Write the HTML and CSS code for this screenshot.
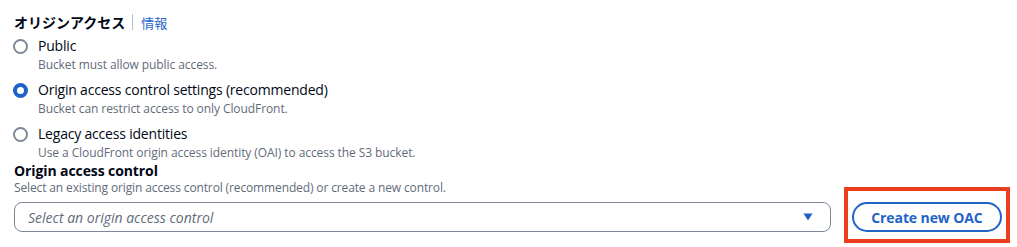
FILE: index.html
```html
<!DOCTYPE html>
<html lang="ja">
<head>
    <meta charset="UTF-8">
    <meta name="viewport" content="width=device-width, initial-scale=1.0">
    <title>Origin access</title>
    <link rel="stylesheet" href="styles.css">
</head>
<body>

    <div class="panel">
        <div class="field-title">
            <span class="title-text">オリジンアクセス</span>
            <span class="divider"></span>
            <a class="info-link" href="#">情報</a>
        </div>

        <div class="radio-group">
            <label class="radio">
                <span class="circle"></span>
                <span class="radio-body">
                    <span class="radio-label">Public</span>
                    <span class="radio-desc">Bucket must allow public access.</span>
                </span>
            </label>
            <label class="radio">
                <span class="circle checked"></span>
                <span class="radio-body">
                    <span class="radio-label">Origin access control settings (recommended)</span>
                    <span class="radio-desc">Bucket can restrict access to only CloudFront.</span>
                </span>
            </label>
            <label class="radio">
                <span class="circle"></span>
                <span class="radio-body">
                    <span class="radio-label">Legacy access identities</span>
                    <span class="radio-desc">Use a CloudFront origin access identity (OAI) to access the S3 bucket.</span>
                </span>
            </label>
        </div>

        <div class="sub-title">Origin access control</div>
        <div class="sub-desc">Select an existing origin access control (recommended) or create a new control.</div>

        <div class="control-row">
            <div class="select">
                <span class="placeholder">Select an origin access control</span>
                <svg class="caret" width="10" height="8" viewBox="0 0 10 8">
                    <path d="M0.5 0.5 L9.5 0.5 L5 7.5 Z" fill="#1f5fc4"/>
                </svg>
            </div>
            <div class="highlight">
                <button class="btn-outline">Create new OAC</button>
            </div>
        </div>
    </div>

</body>
</html>
```

FILE: styles.css
```css
* {
    box-sizing: border-box;
}

html,
body {
    height: 100%;
}

body {
    margin: 0;
    background-color: #ffffff;
    font-family: "Open Sans", "Noto Sans CJK JP", sans-serif;
    color: #000716;
}

.panel {
    padding: 12px 15px 15px 14px;
    display: flex;
    flex-direction: column;
}

.field-title {
    display: flex;
    align-items: center;
    height: 20px;
    font-size: 14px;
}

.title-text {
    font-weight: 700;
    font-family: "Noto Sans CJK JP", sans-serif;
}

.divider {
    width: 1px;
    height: 16px;
    background-color: #b6bec9;
    margin: 0 8px 0 7px;
}

.info-link {
    color: #1f63c9;
    text-decoration: none;
    font-size: 13px;
    font-family: "Noto Sans CJK JP", sans-serif;
}

.radio-group {
    margin-top: 4px;
    display: flex;
    flex-direction: column;
    gap: 6px;
}

.radio {
    display: flex;
    align-items: flex-start;
}

.circle {
    width: 15px;
    height: 15px;
    border-radius: 50%;
    border: 2px solid #7d8998;
    margin: 3px 10px 0 -1px;
    flex-shrink: 0;
}

.circle.checked {
    border: 4.5px solid #1f63c9;
}

.radio-body {
    display: flex;
    flex-direction: column;
}

.radio-label {
    font-size: 14px;
    line-height: 20px;
    letter-spacing: -0.2px;
}

.radio-desc {
    font-size: 12px;
    line-height: 18px;
    color: #5f6b7a;
    letter-spacing: -0.08px;
}

.sub-title {
    font-size: 14px;
    font-weight: 700;
    line-height: 18px;
    letter-spacing: -0.1px;
}

.sub-desc {
    font-size: 12px;
    line-height: 16px;
    color: #5f6b7a;
    letter-spacing: -0.13px;
}

.control-row {
    margin-top: 6px;
    display: flex;
    align-items: center;
}

.select {
    flex: 1;
    height: 30px;
    border: 1.5px solid #7d8998;
    border-radius: 8px;
    display: flex;
    align-items: center;
    justify-content: space-between;
    padding: 0 17px 0 13px;
}

.placeholder {
    font-style: italic;
    font-size: 14px;
    color: #5f6b7a;
    letter-spacing: 0;
}

.highlight {
    position: relative;
    margin-left: 21px;
}

.highlight::after {
    content: "";
    position: absolute;
    top: -15px;
    bottom: -11px;
    left: -8px;
    right: -8px;
    border: 4px solid #ea3e1e;
}

.btn-outline {
    width: 150px;
    height: 30px;
    border: 2px solid #1f63c9;
    border-radius: 20px;
    background-color: #ffffff;
    color: #1f63c9;
    font-family: "Open Sans", sans-serif;
    font-weight: 700;
    font-size: 14px;
    letter-spacing: -0.1px;
    display: flex;
    justify-content: center;
    align-items: center;
}
```
